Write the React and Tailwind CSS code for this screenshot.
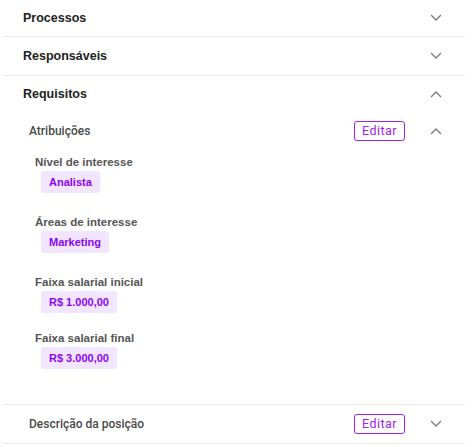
import React from 'react';

const Chevron = ({ up }) => (
  <svg width="12" height="8" viewBox="0 0 12 8" fill="none" className="text-[#7a7a7a]">
    <polyline
      points={up ? '1.5,6.5 6,2 10.5,6.5' : '1.5,1.5 6,6 10.5,1.5'}
      stroke="currentColor"
      strokeWidth="1.4"
      strokeLinecap="round"
      strokeLinejoin="round"
    />
  </svg>
);

const EditButton = () => (
  <button className="h-[20px] w-[51px] rounded-[3px] border-[1.5px] border-[#9b24ee] font-['Roboto',sans-serif] text-[12.5px] tracking-[0.04em] text-[#9b24ee] leading-none">
    Editar
  </button>
);

const Section = ({ title, open, height = 'h-[36px]' }) => (
  <div className={`flex items-center justify-between pl-[20px] pr-[23px] ${height}`}>
    <span className="text-[12.5px] font-bold text-[#222]">{title}</span>
    <Chevron up={open} />
  </div>
);

const Field = ({ label, value, className = '' }) => (
  <div className={className}>
    <div className="pl-[32px] text-[11.5px] font-bold leading-[16px] text-[#555]">{label}</div>
    <div className="flex pl-[38px] mt-[1px]">
      <span className="flex items-center h-[22px] px-[8px] rounded-[3px] bg-[#f2e5ff] text-[11px] font-bold leading-none text-[#8a05ef]">
        {value}
      </span>
    </div>
  </div>
);

export default function App() {
  return (
    <div className="w-[472px] h-[447px] bg-white font-['Liberation_Sans',Arial,sans-serif]">
      <div className="mx-[3px] w-[462px]">
        <Section title="Processos" />
        <div className="h-px bg-[#ebebeb]" />
        <Section title="Responsáveis" height="h-[38px]" />
        <div className="h-px bg-[#ebebeb]" />
        <Section title="Requisitos" open />

        {/* Atribuições */}
        <div className="flex items-center h-[38px] pl-[26px] pr-[23px]">
          <span className="flex-1 font-['Roboto',sans-serif] text-[12px] font-medium text-[#4a4a4a]">Atribuições</span>
          <EditButton />
          <div className="ml-[25px] flex">
            <Chevron up />
          </div>
        </div>

        <Field label="Nível de interesse" value="Analista" className="mt-[4px]" />
        <Field label="Áreas de interesse" value="Marketing" className="mt-[21px]" />
        <Field label="Faixa salarial inicial" value="R$ 1.000,00" className="mt-[21px]" />
        <Field label="Faixa salarial final" value="R$ 3.000,00" className="mt-[17px]" />

        <div className="h-px bg-[#ebebeb] mt-[35px]" />
        <div className="flex items-center h-[38px] pl-[26px] pr-[23px]">
          <span className="flex-1 font-['Roboto',sans-serif] text-[12px] font-medium text-[#4a4a4a]">Descrição da posição</span>
          <EditButton />
          <div className="ml-[25px] flex">
            <Chevron />
          </div>
        </div>
        <div className="h-px bg-[#ebebeb]" />
      </div>
    </div>
  );
}
